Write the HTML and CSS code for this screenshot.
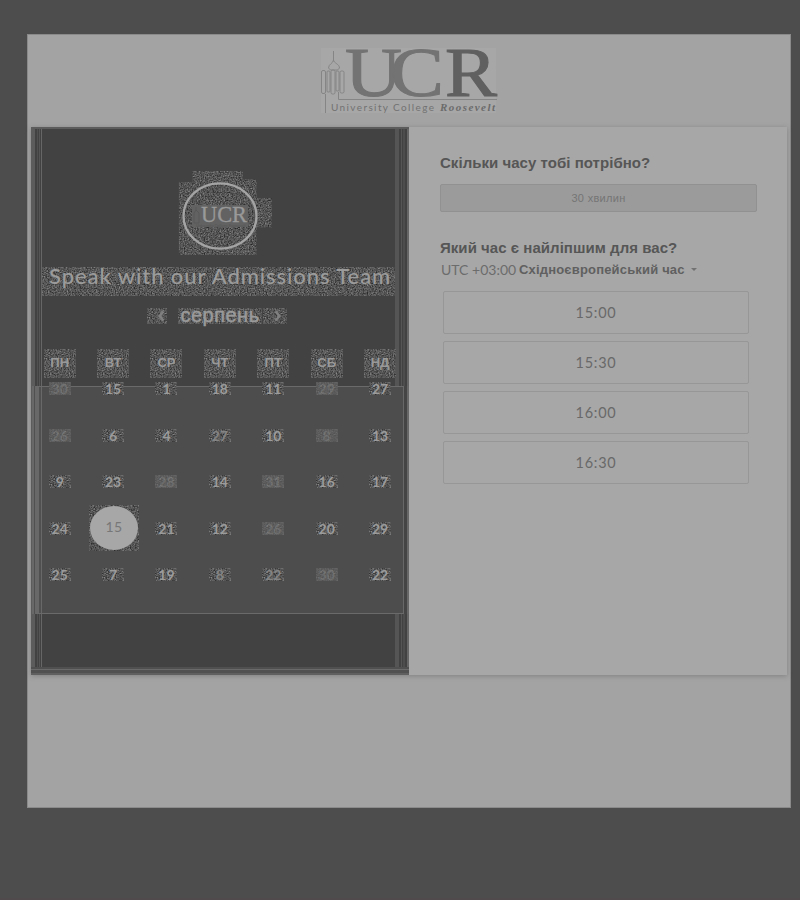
FILE: index.html
```
<!DOCTYPE html>
<html lang="uk">
<head>
<meta charset="utf-8">
<title>University College Roosevelt</title>
<link rel="stylesheet" href="styles.css">
</head>
<body>
<svg class="defs" width="0" height="0" aria-hidden="true">
  <filter id="grain" x="0" y="0" width="100%" height="100%" color-interpolation-filters="sRGB">
    <feTurbulence type="fractalNoise" baseFrequency="0.75" numOctaves="2" seed="4"/>
    <feColorMatrix values=".55 0 0 0 .06  .55 0 0 0 .06  .55 0 0 0 .06  0 0 0 0 1"/>
  </filter>
</svg>
<main class="page">
  <header class="brand">
    <svg width="180" height="70" viewBox="318 46 180 70">
      <rect x="321" y="48" width="175" height="65" fill="#a7a7a7"/>
      <g fill="none" stroke="#858585" stroke-width="1">
        <path d="M333.500 51v9c0 3-5 4-5 8l2 2h7l2-2c0-4-6-5-6-8M325.500 94v19"/>
        <rect x="321.500" y="70.500" width="4" height="23" rx="1.500"/><rect x="327" y="71" width="3" height="21" rx="1"/><rect x="331" y="70" width="4" height="24" rx="1.500"/><rect x="336" y="71" width="3" height="20" rx="1"/><rect x="340" y="71" width="4" height="22" rx="1.500"/>
        <path d="M338.500 92v7.500H497"/>
      </g>
      <g font-family="Liberation Serif, serif" font-size="70" fill="#737373" stroke="#737373" stroke-width="1">
        <text x="345" y="95.500" textLength="57" lengthAdjust="spacingAndGlyphs">U</text>
        <text x="390" y="95.500" textLength="54" lengthAdjust="spacingAndGlyphs">C</text>
        <text x="445" y="95.500" textLength="52" lengthAdjust="spacingAndGlyphs" fill="#606060" stroke="#606060">R</text>
      </g>
      <text x="331" y="111" font-family="Lato, sans-serif" font-size="10" fill="#727272" textLength="103">University College</text>
      <text x="440" y="111" font-family="Liberation Serif, serif" font-size="11" font-weight="bold" font-style="italic" fill="#6b6b6b" textLength="55">Roosevelt</text>
    </svg>
  </header>
  <div class="card">
    <section class="calendar">
      <div class="seal grain">
        <svg width="90" height="82" viewBox="175 173 90 82">
          <rect x="192" y="205" width="56" height="22" fill="#626262"/>
          <ellipse cx="220" cy="216" rx="36.500" ry="32.700" fill="none" stroke="#a4a4a4" stroke-width="2.300"/>
          <path d="M196 207v3l-2 3v10h5v-10l-3-3" fill="none" stroke="#585858"/>
          <text x="201" y="221.500" font-family="Liberation Serif, serif" font-size="23" fill="#999" stroke="#999" stroke-width=".3" textLength="46" lengthAdjust="spacingAndGlyphs">UCR</text>
          <text x="196" y="227" font-family="Lato, sans-serif" font-size="4" fill="#555" textLength="50">University College Roosevelt</text>
        </svg>
      </div>
      <h1 class="title grain"><span>Speak with our Admissions Team</span></h1>
      <div class="month">
        <svg class="arrow" width="20" height="16" viewBox="0 0 20 16"><rect width="20" height="16" filter="url(#grain)"/><path d="M16.500 3.500 12.500 8l4 4.500" fill="none" stroke="#808080" stroke-width="2.400"/></svg>
        <span class="month-name grain">серпень</span>
        <svg class="arrow" width="24" height="16" viewBox="0 0 24 16"><rect width="24" height="16" filter="url(#grain)"/><path d="M12.500 3.500 16.500 8l-4 4.500" fill="none" stroke="#808080" stroke-width="2.400"/></svg>
      </div>
      <div class="weekdays">
        <span class="grain">ПН</span><span class="grain">ВТ</span><span class="grain">СР</span><span class="grain">ЧТ</span><span class="grain">ПТ</span><span class="grain">СБ</span><span class="grain">НД</span>
      </div>
      <div class="days">
        <span class="grain dim">30</span><span class="grain">15</span><span class="grain">1</span><span class="grain">18</span><span class="grain">11</span><span class="grain dim">29</span><span class="grain">27</span>
        <span class="grain dim">26</span><span class="grain">6</span><span class="grain">4</span><span class="grain mid">27</span><span class="grain">10</span><span class="grain dim">8</span><span class="grain">13</span>
        <span class="grain">9</span><span class="grain">23</span><span class="grain dim">28</span><span class="grain">14</span><span class="grain dim">31</span><span class="grain">16</span><span class="grain">17</span>
        <span class="grain">24</span><span class="grain selected"><b>15</b></span><span class="grain">21</span><span class="grain">12</span><span class="grain dim">26</span><span class="grain">20</span><span class="grain">29</span>
        <span class="grain">25</span><span class="grain">7</span><span class="grain">19</span><span class="grain mid">8</span><span class="grain mid">22</span><span class="grain dim">30</span><span class="grain">22</span>
      </div>
    </section>
    <section class="times">
      <h2 class="q1">Скільки часу тобі потрібно?</h2>
      <div class="duration"><span>30 хвилин</span></div>
      <h2 class="q2">Який час є найліпшим для вас?</h2>
      <div class="zone"><span class="utc">UTC +03:00</span><b>Східноєвропейський час</b><i class="caret"></i></div>
      <div class="slots">
        <div class="slot">15:00</div>
        <div class="slot">15:30</div>
        <div class="slot">16:00</div>
        <div class="slot">16:30</div>
      </div>
    </section>
  </div>
</main>
</body>
</html>
```
FILE: styles.css
```
* { box-sizing: border-box; }
body {
  margin: 0;
  height: 900px;
  padding: 34px 9px 0 27px;
  overflow: hidden;
  background: #4d4d4d;
  border-bottom: 2px solid #514a4d;
  font-family: "Liberation Sans", sans-serif;
}
.defs { position: absolute; }
.page {
  height: 774px;
  background: #a3a3a3;
  border: 1px solid #8a8a8a;
  padding: 0 3px;
}
.brand { height: 92px; padding: 11px 0 0 287px; }
.brand svg { display: block; overflow: visible; }
.card {
  display: flex;
  width: 756px;
  height: 548px;
  background: #a7a7a7;
  box-shadow: 0 1px 5px rgba(70, 70, 70, .35);
}

/* Calendar panel */
.calendar {
  width: 378px;
  height: 548px;
  border-top: 2px solid #5c5c5c;
  border-bottom: 2px solid #5f5f5f;
  display: flex;
  flex-direction: column;
  background:
    linear-gradient(#6a6a6a, #6a6a6a) 5px 257px / 368px 1px no-repeat,
    linear-gradient(#6a6a6a, #6a6a6a) 5px 484px / 368px 1px no-repeat,
    linear-gradient(90deg, #5c5c5c 1px, #686868 1px 3px, #505050 3px 4px, #686868 4px 8px, #505050 8px 10px, #686868 10px 11px, #4d4d4d 11px 372px, #686868 372px 373px, #454545 373px 376px, #686868 376px) 0 257px / 378px 228px no-repeat,
    linear-gradient(#505050 2px, #6a6a6a 2px 3px, #505050 3px) 0 538px / 378px 6px no-repeat,
    linear-gradient(90deg, #5c5c5c 4px, #424242 4px 6px, #505050 6px 7px, #424242 7px 8px, #555 8px 9px, #424242 9px 10px, #666 10px 11px, #424242 11px 364px, #555 364px 368px, #424242 368px 370px, #555 370px 371px, #424242 371px 372px, #4d4d4d 372px 374px, #424242 374px 376px, #666 376px);
}
.grain { position: relative; isolation: isolate; }
.grain::before {
  content: "";
  position: absolute;
  inset: 0;
  z-index: -1;
  background: #555;
  filter: url(#grain);
}
.seal { width: 90px; height: 82px; margin: 44px 0 0 144px; }
.seal::before {
  clip-path: polygon(18% -4%, 70% -4%, 70% 10%, 84% 10%, 84% 32%, 100% 32%, 100% 67%, 84% 67%, 84% 100%, 4% 100%, 4% 13%, 18% 13%);
  inset: -2px -7px 0 0;
}
.seal svg { display: block; }
.title {
  margin: 12px 0 0 11px;
  width: 353px;
  height: 29px;
  padding-left: 7px;
  font: 500 22px/18px Lato, sans-serif;
  letter-spacing: .92px;
  white-space: nowrap;
  color: #9b9b9b;
}
.month { display: flex; align-items: center; height: 22px; margin: 9px 0 0 116px; }
.month-name {
  width: 84px;
  height: 16px;
  margin: 0 1px 0 11px;
  text-align: center;
  font-size: 20px;
  line-height: 14px;
  letter-spacing: .5px;
  color: #9a9a9a;
  -webkit-text-stroke: .5px #9a9a9a;
}
.month .arrow { display: block; }
.weekdays, .days {
  display: grid;
  grid-template-columns: repeat(7, 53.4px);
  justify-items: center;
  margin-left: 2px;
}
.weekdays { margin-top: 22px; }
.weekdays span {
  width: 32px;
  height: 29px;
  text-align: center;
  font: bold 13px/27px "Liberation Sans", sans-serif;
  color: #999;
}
.days { grid-auto-rows: 46.5px; margin-top: -12.5px; align-items: center; }
.days span {
  width: 22px;
  height: 13px;
  text-align: center;
  font: bold 14px/13px Lato, sans-serif;
  color: #9b9b9b;
}
.days .dim { color: #7a7a7a; }
.days .mid { color: #848484; }
.days .dim::before { background: #606060; filter: none; }
.days .dim::after {
  content: "";
  position: absolute;
  inset: 0;
  filter: url(#grain);
  background: #555;
  opacity: .3;
}
.days .selected { width: 50px; height: 46px; padding: 1px; margin-left: 2px; }
.days .selected b {
  display: block;
  height: 44px;
  border-radius: 50%;
  background: #a7a7a7;
  color: #777;
  font: 14px/42px Lato, sans-serif;
  letter-spacing: .5px;
}

/* Time selection */
.times { width: 378px; padding: 27px 0 0 31px; }
.times h2 { margin: 0; line-height: 18px; color: #565656; font-size: 15px; letter-spacing: .04px; white-space: nowrap; }
.duration {
  width: 317px;
  height: 28px;
  margin: 12px 0 27px;
  background: #9b9b9b;
  border: 1px solid #919191;
  border-radius: 2px;
  text-align: center;
  font-size: 11px;
  line-height: 26px;
  letter-spacing: .3px;
  color: #757575;
}
.zone {
  display: flex;
  align-items: center;
  height: 18px;
  margin: 3px 0 13px 1px;
  color: #666;
  font-size: 13px;
  white-space: nowrap;
}
.utc { width: 78px; font-family: Lato, sans-serif; font-size: 14px; color: #6c6c6c; }
.zone b { width: 166px; color: #606060; letter-spacing: .18px; }
.caret { margin-left: 6px; border: 3.5px solid transparent; border-top-color: #727272; border-bottom: 0; }
.slots { display: grid; gap: 7px; margin-left: 3px; width: 306px; }
.slot {
  height: 43px;
  border: 1px solid #979797;
  border-radius: 2px;
  text-align: center;
  font: 14.5px/41px Lato, sans-serif;
  letter-spacing: .7px;
  color: #696969;
}
```
